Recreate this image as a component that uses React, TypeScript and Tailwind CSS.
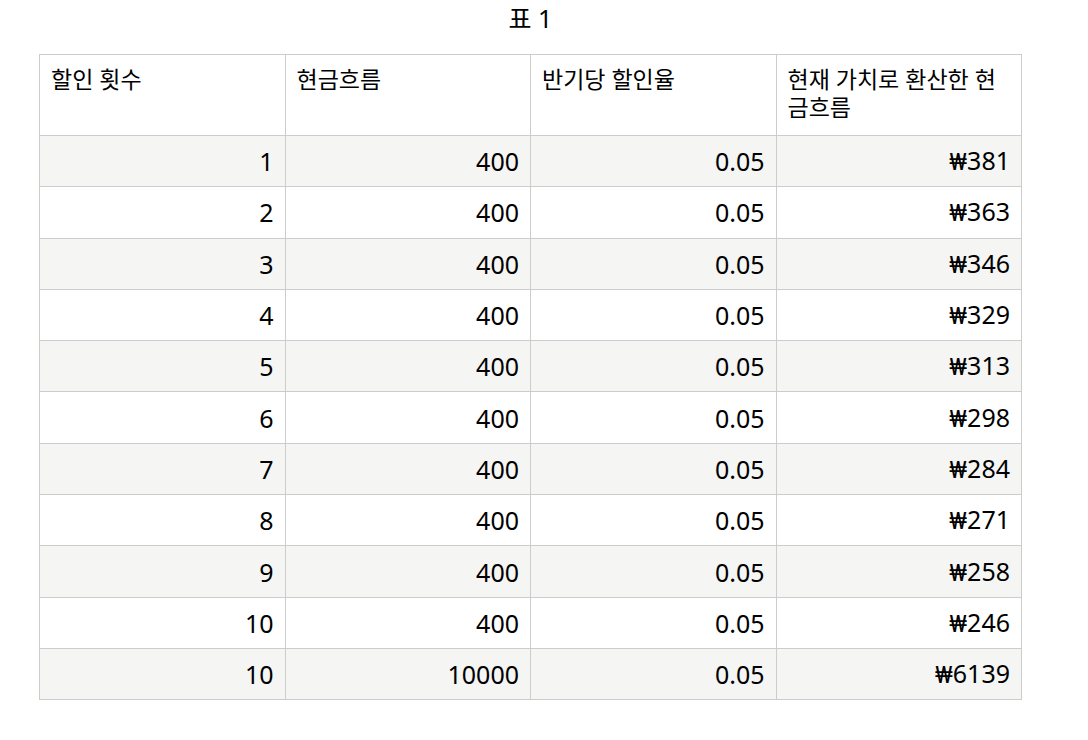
export default function App() {
  const rows = [
    { n: "1", cash: "400", rate: "0.05", pv: "381" },
    { n: "2", cash: "400", rate: "0.05", pv: "363" },
    { n: "3", cash: "400", rate: "0.05", pv: "346" },
    { n: "4", cash: "400", rate: "0.05", pv: "329" },
    { n: "5", cash: "400", rate: "0.05", pv: "313" },
    { n: "6", cash: "400", rate: "0.05", pv: "298" },
    { n: "7", cash: "400", rate: "0.05", pv: "284" },
    { n: "8", cash: "400", rate: "0.05", pv: "271" },
    { n: "9", cash: "400", rate: "0.05", pv: "258" },
    { n: "10", cash: "400", rate: "0.05", pv: "246" },
    { n: "10", cash: "10000", rate: "0.05", pv: "6139" },
  ]
  const headers = ["할인 횟수", "현금흐름", "반기당 할인율", "현재 가치로 환산한 현금흐름"]
  const cell = "h-[51.3px] border border-[#cccccc] text-right text-[25px] leading-[28px] pr-[11px] align-middle"

  return (
    <div
      className="min-h-screen w-full bg-white text-black"
      style={{ fontFamily: '"Noto Sans", "Noto Sans CJK KR", sans-serif' }}
    >
      <div className="ml-[39px] w-[983px] pt-[2px]">
        <div className="text-center text-[25px] leading-[32px] h-[52px]">표 1</div>
        <table className="w-full border-collapse table-fixed">
          <thead>
            <tr>
              {headers.map((h) => (
                <th
                  key={h}
                  className="h-[81px] border border-[#cccccc] align-top text-left font-normal text-[23px] leading-[28px] pl-[11px] pr-[12px] pt-[10px]"
                >
                  {h}
                </th>
              ))}
            </tr>
          </thead>
          <tbody>
            {rows.map((r, i) => (
              <tr key={i} className={i % 2 === 0 ? "bg-[#f5f5f4]" : "bg-white"}>
                <td className={cell}>{r.n}</td>
                <td className={cell}>{r.cash}</td>
                <td className={cell}>{r.rate}</td>
                <td className={cell}>
                  <span className="text-[24px]" style={{ fontFamily: 'Roboto, "Noto Sans CJK KR", sans-serif' }}>₩</span>
                  {r.pv}
                </td>
              </tr>
            ))}
          </tbody>
        </table>
      </div>
    </div>
  )
}
